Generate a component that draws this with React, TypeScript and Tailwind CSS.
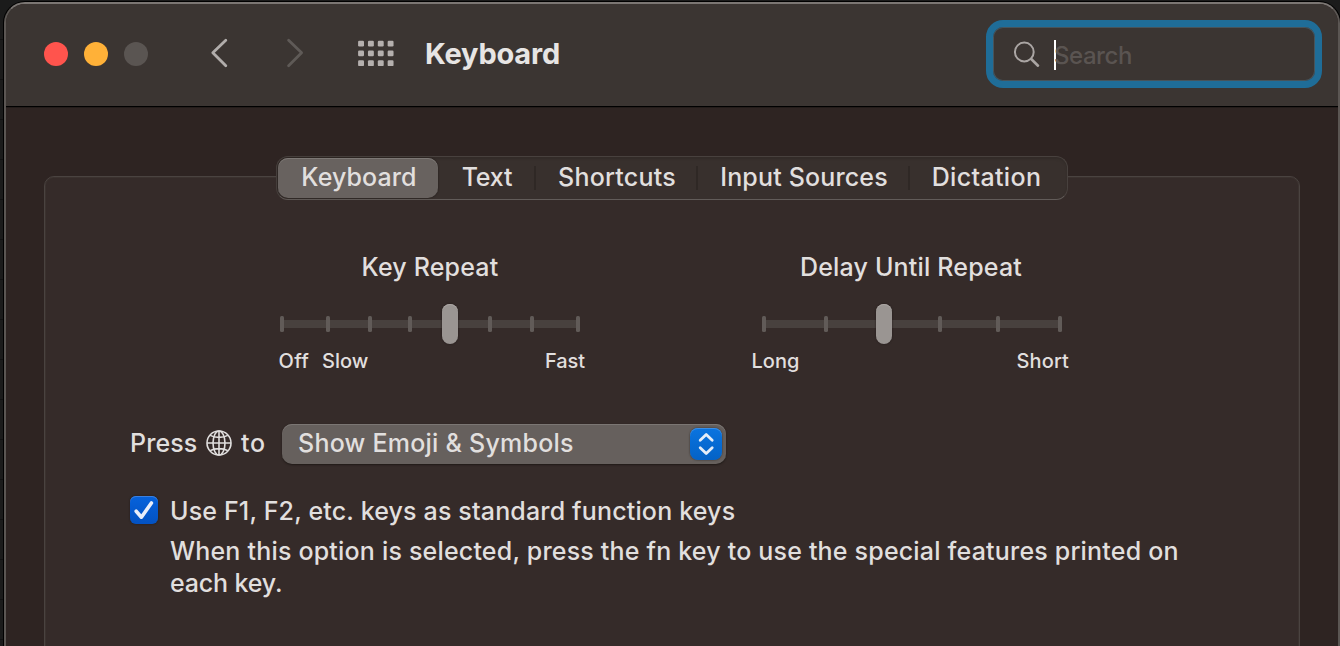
import type { ReactNode } from "react";

const squares = [0, 1, 2].flatMap((row) => [0, 1, 2, 3].map((col) => ({ row, col })));

function TitleBar() {
  return (
    <header className="flex h-[102px] shrink-0 items-start bg-[#3b3532]">
      <div className="ml-[38px] mt-[38px] flex gap-4">
        <span className="size-6 rounded-full bg-[#ff544d]" />
        <span className="size-6 rounded-full bg-[#ffb138]" />
        <span className="size-6 rounded-full bg-[#5a5552]" />
      </div>
      <svg className="ml-[60px] mt-[34px] h-8 w-6" viewBox="0 0 24 32" fill="none">
        <path d="M17.8 2.2 4.8 14.8 17.8 27.8" stroke="#b1adab" strokeWidth="2.8" strokeLinecap="round" strokeLinejoin="round" />
      </svg>
      <svg className="ml-[50px] mt-[34px] h-8 w-6" viewBox="0 0 24 32" fill="none">
        <path d="M6.6 2.2 19.6 14.8 6.6 27.8" stroke="#5f5a57" strokeWidth="2.8" strokeLinecap="round" strokeLinejoin="round" />
      </svg>
      <svg className="ml-[52px] mt-[36px] h-7 w-9" viewBox="0 0 36 28" fill="#b5b0ae">
        {squares.map(({ row, col }) => (
          <rect key={`${row}-${col}`} x={0.1 + col * 9.85} y={0.7 + row * 9.8} width="5.9" height="5.8" rx="1.2" />
        ))}
      </svg>
      <h1 className="ml-[31px] mt-[32px] whitespace-nowrap text-[29px] font-bold leading-9 tracking-[-0.2px] text-[#e7e5e4]">
        Keyboard
      </h1>
      <label className="ml-auto mr-[16px] mt-4 flex h-[68px] w-[336px] items-start rounded-[17px] border-[7px] border-[#1f6d98] bg-[#3b3532] shadow-[inset_0_0_0_1px_#47545b]">
        <svg className="ml-5 mt-[13px] size-7" viewBox="0 0 28 28" fill="none" stroke="#aaa5a3" strokeLinecap="round">
          <circle cx="11.3" cy="12" r="9.4" strokeWidth="2" />
          <path d="M18.2 19 25 25.7" strokeWidth="2.6" />
        </svg>
        <span className="ml-[13px] mt-[13px] h-[30px] w-[2px] bg-white" />
        <span className="mt-[14px] -ml-[2px] text-[24px] font-[450] leading-[30px] tracking-[-0.45px] text-[#5a5451]">Search</span>
      </label>
    </header>
  );
}

function Tabs() {
  const sep = "flex items-center before:h-6 before:w-[2px] before:shrink-0 before:-translate-x-px before:bg-[#2f2825] before:content-['']";
  return (
    <nav className="-mt-[21px] ml-[231px] flex h-11 w-[792px] rounded-[12px] border border-[#48413e] border-b-[#625c59] bg-[#38302d] p-px text-[25px] leading-8 tracking-[0.1px] text-[#e1dfde] shadow-[inset_0_2px_2px_#332c29]">
      <div className="flex w-[160px] justify-center rounded-[10px] bg-[#68625f] pl-[2px] pt-[3px] shadow-[inset_0_1px_0_#7d7875,0_0_2px_#1d1715]">
        <span>Keyboard</span>
      </div>
      <div className="flex w-[97px] justify-center pl-px pt-[3px] tracking-[-0.2px]">Text</div>
      <div className={`${sep} w-[162px]`}>
        <span className="-mt-[3px] flex-1 text-center tracking-[0.22px]">Shortcuts</span>
      </div>
      <div className={`${sep} w-[212px]`}>
        <span className="-mt-[3px] flex-1 text-center tracking-[0.16px]">Input Sources</span>
      </div>
      <div className={`${sep} flex-1`}>
        <span className="-mt-[3px] flex-1 pr-[4px] text-center tracking-[0.35px]">Dictation</span>
      </div>
    </nav>
  );
}

function Slider({ title, ticks, value, children }: { title: ReactNode; ticks: number[]; value: number; children: ReactNode }) {
  return (
    <section className="w-[300px]">
      <h2 className="text-center text-[25px] leading-8 tracking-[0.18px] whitespace-nowrap">{title}</h2>
      <div className="relative mt-[21px] flex h-10 items-center">
        <div className="mx-[2px] h-2 flex-1 bg-[#48413e]" />
        {ticks.map((x) => (
          <span key={x} className="absolute top-3 h-4 w-1 rounded-[1.5px] bg-[#615b58]" style={{ left: x - 2 }} />
        ))}
        <span
          className="absolute top-0 h-10 w-4 rounded-[8px] bg-[#9a9592] shadow-[0_0_2px_#1f1917,inset_0_1px_0_#aba6a3]"
          style={{ left: value - 8 }}
        />
      </div>
      <div className="mt-[5px] flex text-[20px] leading-6">{children}</div>
    </section>
  );
}

function GlobeIcon() {
  return (
    <svg className="ml-[8px] mt-[3px] size-[26px]" viewBox="0 0 26 26" fill="none" stroke="#e1dfde" strokeWidth="1.6">
      <circle cx="13" cy="13" r="12" />
      <ellipse cx="13" cy="13" rx="6" ry="12" />
      <path d="M13 1v24M1 13h24M4.2 5.4C8.8 8 17.2 8 21.8 5.4M4.2 20.6c4.6-2.6 13-2.6 17.6 0" />
    </svg>
  );
}

export default function App() {
  return (
    <main className="flex h-[646px] w-[1340px] overflow-hidden bg-[#1b1b1b] bg-[repeating-linear-gradient(to_bottom,transparent_0_39px,#121212_39px_40px)] pl-1 pt-[2px] font-['Inter','Liberation_Sans',sans-serif] font-[450] text-[#e1dfde]">
      <div className="flex h-[700px] w-[1336px] shrink-0 flex-col overflow-hidden rounded-[21px] border-2 border-[#5b5653] border-t-[#7b7673] bg-[#2e2422] shadow-[0_0_0_1px_#000]">
        <TitleBar />
        <div className="h-px shrink-0 bg-black" />
        <div className="h-px shrink-0 bg-[#231c1a]" />
        <div className="ml-[38px] mt-[68px] h-[560px] w-[1256px] shrink-0 rounded-[10px] border border-[#4a4340] bg-[#352b29] shadow-[inset_0_0_0_1px_#3b322f]">
          <Tabs />

          <div className="ml-[235px] mt-[51px] flex gap-[182px]">
            <Slider title="Key Repeat" ticks={[2, 48, 90, 130, 170, 210, 252, 298]} value={170}>
              <span className="-ml-[1.5px] tracking-[0.3px]">Off</span>
              <span className="ml-[13px]">Slow</span>
              <span className="-mr-[5px] ml-auto tracking-[-0.1px]">Fast</span>
            </Slider>
            <Slider title={<span className="-ml-[2px]">Delay Until Repeat</span>} ticks={[2, 64, 122, 178, 236, 298]} value={122}>
              <span className="-ml-[10.5px] tracking-[0px]">Long</span>
              <span className="-mr-[7px] ml-auto tracking-[0.1px]">Short</span>
            </Slider>
          </div>

          <div className="ml-[84px] mt-[51px] flex h-10 items-start text-[25px] leading-8">
            <span className="mt-[3px] w-[69px] pl-px tracking-[0.1px]">Press</span>
            <div className="mt-[3px]">
              <GlobeIcon />
            </div>
            <span className="ml-[9px] mt-[3px] w-[41px] tracking-[0.8px]">to</span>
            <div className="flex h-10 w-[444px] rounded-[10px] bg-[#66605d] shadow-[inset_0_1px_0_#7b7673,0_1px_2px_#1f1917]">
              <span className="ml-4 mt-[3px] tracking-[0.24px]">Show Emoji &amp; Symbols</span>
              <span className="ml-auto mr-1 mt-1 size-8 rounded-[8px] bg-linear-to-b from-[#0a74e0] to-[#0462c6] shadow-[inset_0_1px_0_#3a8fe8,0_0_2px_#2e2825]">
                <svg className="size-8" viewBox="0 0 32 32" fill="none" stroke="#e4edf8" strokeWidth="2.8" strokeLinecap="round" strokeLinejoin="round">
                  <path d="m10.2 12.3 6-5.8 6 5.8M10.2 19.7l6 5.8 6-5.8" />
                </svg>
              </span>
            </div>
          </div>

          <div className="ml-[85px] mt-[31px] flex items-start text-[25px] leading-8">
            <span className="mt-[1px] size-7 shrink-0 rounded-[6px] bg-linear-to-b from-[#0662dc] to-[#0352c2] shadow-[inset_0_1px_0_#3a80e0,0_0_2px_#1f1917]">
              <svg className="size-7" viewBox="0 0 28 28" fill="none" stroke="#e8eefa" strokeWidth="3.6" strokeLinecap="round" strokeLinejoin="round">
                <path d="m6.2 15.2 5.2 6L21.4 7" />
              </svg>
            </span>
            <div className="ml-[12px]">
              <p className="whitespace-nowrap tracking-[0.16px]">Use F1, F2, etc. keys as standard function keys</p>
              <p className="mt-2 whitespace-nowrap tracking-[0.19px]">
                When this option is selected, press the fn key to use the special features printed on
                <br />
                <span className="tracking-[-0.15px]">each key.</span>
              </p>
            </div>
          </div>
        </div>
      </div>
    </main>
  );
}
